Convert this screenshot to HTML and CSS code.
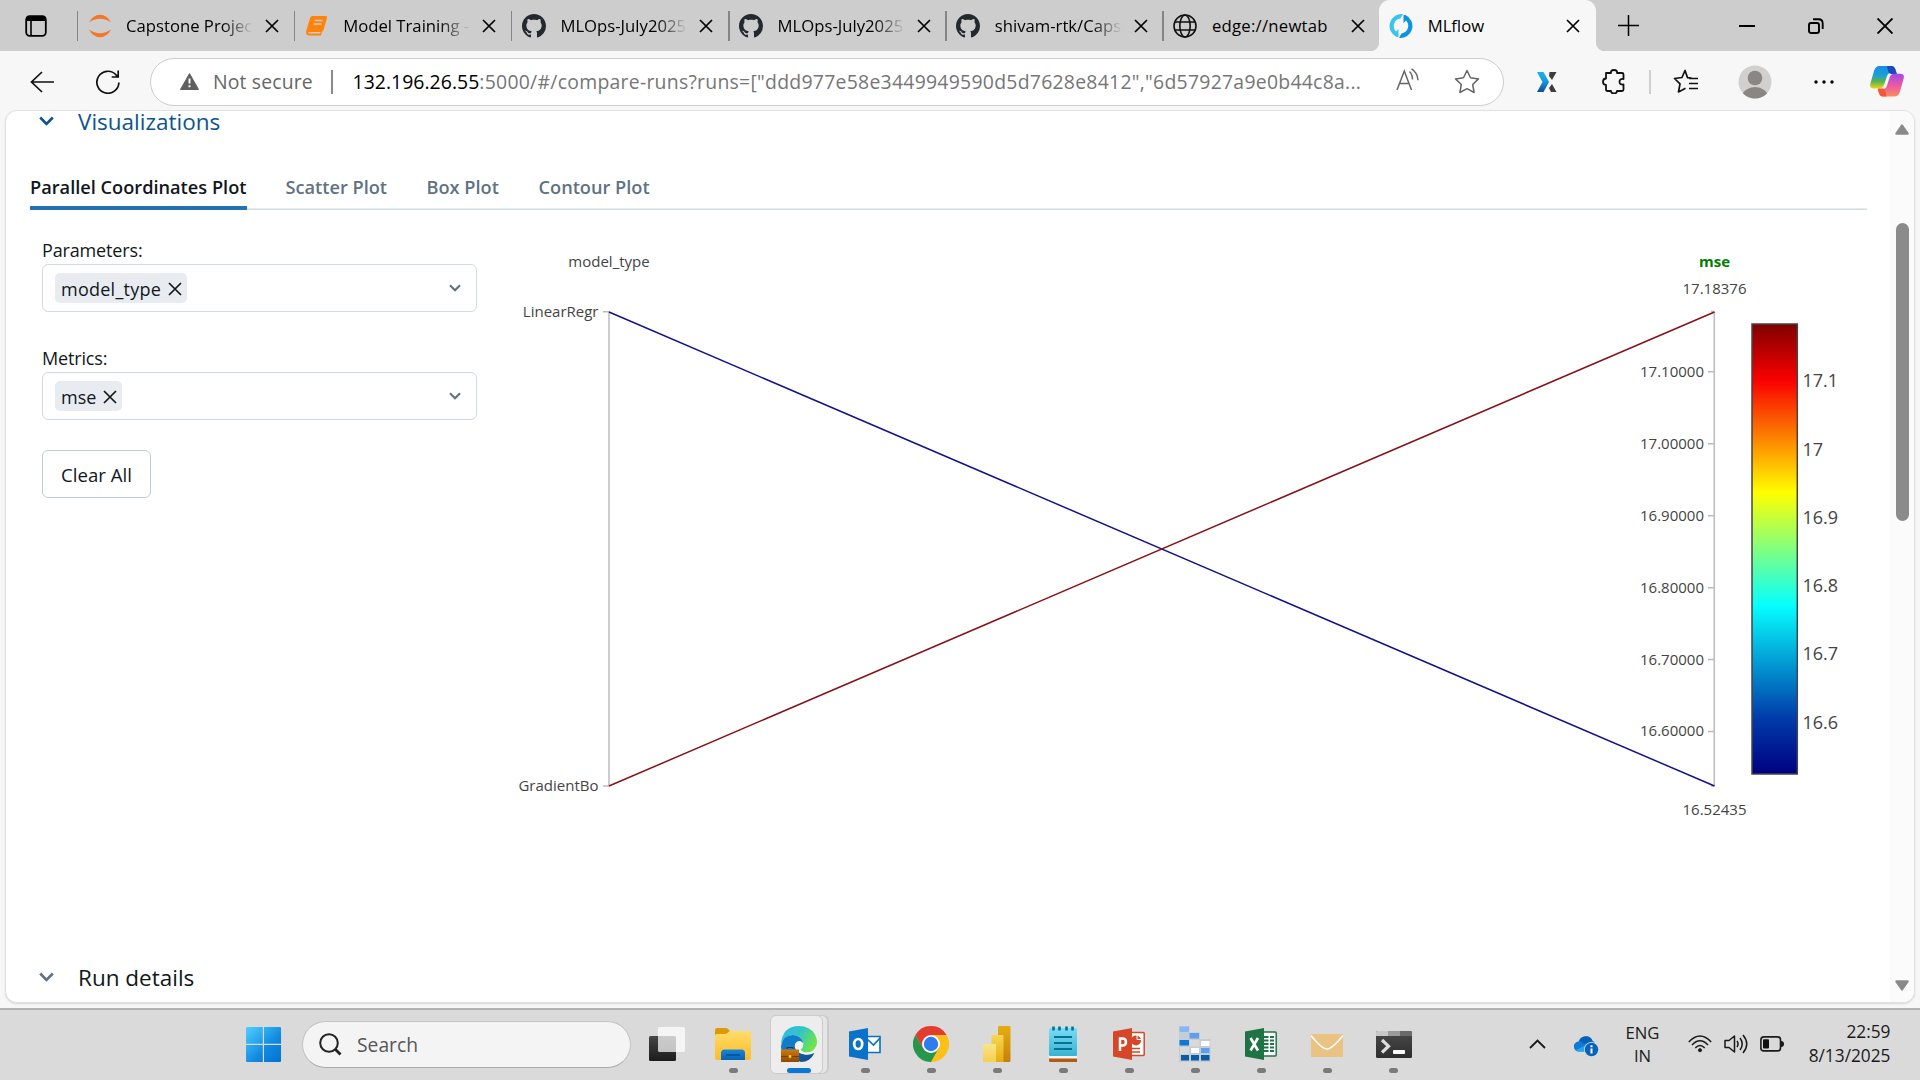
FILE: index.html
```html
<!DOCTYPE html>
<html lang="en">
<head>
<meta charset="utf-8">
<title>MLflow</title>
<link rel="stylesheet" href="styles.css">
</head>
<body>
<svg class="defs" width="0" height="0">
  <defs>
    <symbol id="x" viewBox="0 0 14 14"><path d="M1 1l12 12M13 1L1 13" fill="none" stroke="currentColor" stroke-width="1.7"/></symbol>
    <symbol id="chev" viewBox="0 0 15 10"><path d="M1.2 1.5l6.3 6.3 6.3-6.3" fill="none" stroke="currentColor" stroke-width="2.6"/></symbol>
    <symbol id="github" viewBox="0 0 16 16"><path fill="#24292f" d="M8 0C3.58 0 0 3.58 0 8c0 3.54 2.29 6.53 5.47 7.59.4.07.55-.17.55-.38 0-.19-.01-.82-.01-1.49-2.01.37-2.53-.49-2.69-.94-.09-.23-.48-.94-.82-1.13-.28-.15-.68-.52-.01-.53.63-.01 1.08.58 1.23.82.72 1.21 1.87.87 2.33.66.07-.52.28-.87.51-1.07-1.78-.2-3.64-.89-3.64-3.95 0-.87.31-1.59.82-2.15-.08-.2-.36-1.02.08-2.12 0 0 .67-.21 2.2.82.64-.18 1.32-.27 2-.27s1.36.09 2 .27c1.53-1.04 2.2-.82 2.2-.82.44 1.1.16 1.92.08 2.12.51.56.82 1.27.82 2.15 0 3.07-1.87 3.75-3.65 3.95.29.25.54.73.54 1.48 0 1.07-.01 1.93-.01 2.2 0 .21.15.46.55.38A8.01 8.01 0 0 0 16 8c0-4.42-3.58-8-8-8z"/></symbol>
    <linearGradient id="jet" x1="0" y1="1" x2="0" y2="0">
      <stop offset="0" stop-color="#000083"/><stop offset=".125" stop-color="#003caa"/><stop offset=".375" stop-color="#05ffff"/><stop offset=".625" stop-color="#ffff00"/><stop offset=".875" stop-color="#fa0000"/><stop offset="1" stop-color="#800000"/>
    </linearGradient>
    <linearGradient id="win" x1="0" y1="0" x2="1" y2="1"><stop offset="0" stop-color="#4fd0ff"/><stop offset=".6" stop-color="#1189e0"/><stop offset="1" stop-color="#0072d0"/></linearGradient>
    <linearGradient id="tvd" x1="0" y1="0" x2="0" y2="1"><stop offset="0" stop-color="#454545"/><stop offset="1" stop-color="#1c1c1c"/></linearGradient>
    <linearGradient id="fold" x1="0" y1="0" x2="0" y2="1"><stop offset="0" stop-color="#ffdc6b"/><stop offset="1" stop-color="#fcbc25"/></linearGradient>
    <linearGradient id="blu" x1="0" y1="0" x2="0" y2="1"><stop offset="0" stop-color="#1a86dc"/><stop offset="1" stop-color="#0462b4"/></linearGradient>
    <linearGradient id="edg" x1="0" y1="0" x2="1" y2=".5"><stop offset="0" stop-color="#35b6ec"/><stop offset=".5" stop-color="#2fc5c9"/><stop offset="1" stop-color="#6ee34c"/></linearGradient>
    <linearGradient id="edb" x1="0" y1="0" x2="1" y2="1"><stop offset="0" stop-color="#0f6fb8"/><stop offset="1" stop-color="#124a8c"/></linearGradient>
    <linearGradient id="case" x1="0" y1="0" x2="0" y2="1"><stop offset="0" stop-color="#cf7a10"/><stop offset="1" stop-color="#8f4a00"/></linearGradient>
    <linearGradient id="pb1" x1="0" y1="0" x2="0" y2="1"><stop offset="0" stop-color="#e6ad10"/><stop offset="1" stop-color="#c87e0e"/></linearGradient>
    <linearGradient id="pb2" x1="0" y1="0" x2="0" y2="1"><stop offset="0" stop-color="#f6d751"/><stop offset="1" stop-color="#e6ad10"/></linearGradient>
    <linearGradient id="pb3" x1="0" y1="0" x2="0" y2="1"><stop offset="0" stop-color="#f9e589"/><stop offset="1" stop-color="#f3d04c"/></linearGradient>
    <linearGradient id="note" x1="0" y1="0" x2="0" y2="1"><stop offset="0" stop-color="#7bdcf5"/><stop offset="1" stop-color="#35b3d3"/></linearGradient>
    <linearGradient id="term" x1="0" y1="0" x2="0" y2="1"><stop offset="0" stop-color="#4a4a4a"/><stop offset="1" stop-color="#2e2e2e"/></linearGradient>
    <linearGradient id="cp1" x1="0" y1="0" x2="0" y2="1"><stop offset="0" stop-color="#1c8be8"/><stop offset=".4" stop-color="#1a9fd8"/><stop offset=".7" stop-color="#5bb64a"/><stop offset="1" stop-color="#f4d21a"/></linearGradient>
    <linearGradient id="cp2" x1="0" y1="0" x2="0" y2="1"><stop offset="0" stop-color="#a04be8"/><stop offset=".5" stop-color="#e958a8"/><stop offset="1" stop-color="#ff8a5a"/></linearGradient>
    <linearGradient id="xb" x1="0" y1="0" x2="0" y2="1"><stop offset="0" stop-color="#17b4e8"/><stop offset=".5" stop-color="#1395dc"/><stop offset="1" stop-color="#114a92"/></linearGradient>
  </defs>
</svg>

<header class="tabstrip">
  <svg class="tabmenu" width="22" height="22" viewBox="0 0 22 22"><rect x="1.2" y="1.2" width="19.6" height="19.6" rx="3.5" fill="none" stroke="#000" stroke-width="1.8"/><path d="M1 6V4q0-3 3-3h14q3 0 3 3v2z"/><path d="M6 6v15" stroke="#000" stroke-width="1.6"/></svg>

  <div class="tab"><span class="fav"><svg width="22" height="24" viewBox="0 0 22 24"><path d="M0 8.5Q4 .8 11 .8T22 8.500Q17 4.800 11 4.800T0 8.500zM0 15.500Q5 19.200 11 19.200T22 15.500Q18 23.200 11 23.200T0 15.500z" fill="#f37726"/></svg></span><span class="title fade">Capstone Project</span><svg class="close"><use href="#x"/></svg></div>
  <div class="tab"><span class="fav"><svg width="22" height="20" viewBox="0 0 22 20"><path d="M6.500 0H20q1.500 0 1 1.800L17.500 14q-.4 1.200-1.500 1.500L15 19.500H3Q.5 19.500 0 17q0-1 .4-2.500L4 2.200Q4.800 0 6.500 0z" fill="#ff8309"/><path d="M8.500 4.500h8M7.500 8h8M2.500 16.800h12" stroke="#cdcdcd" stroke-width="1.400"/></svg></span><span class="title fade">Model Training -</span><svg class="close"><use href="#x"/></svg></div>
  <div class="tab"><span class="fav"><svg width="24" height="24"><use href="#github"/></svg></span><span class="title fade">MLOps-July2025</span><svg class="close"><use href="#x"/></svg></div>
  <div class="tab"><span class="fav"><svg width="24" height="24"><use href="#github"/></svg></span><span class="title fade">MLOps-July2025</span><svg class="close"><use href="#x"/></svg></div>
  <div class="tab"><span class="fav"><svg width="24" height="24"><use href="#github"/></svg></span><span class="title fade">shivam-rtk/Caps</span><svg class="close"><use href="#x"/></svg></div>
  <div class="tab"><span class="fav"><svg width="24" height="24" viewBox="0 0 24 24" fill="none" stroke="#111" stroke-width="1.600"><circle cx="12" cy="12" r="11"/><ellipse cx="12" cy="12" rx="5.200" ry="11"/><path d="M2 8h20M2 16h20"/></svg></span><span class="title wide">edge://newtab</span><svg class="close"><use href="#x"/></svg></div>
  <div class="tab active"><span class="fav"><svg width="24" height="24" viewBox="0 0 24 24"><path d="M7.500 23A12 12 0 0 1 14 .2l-2.600 4.400A7.600 7.600 0 0 0 7 17.500L9.500 15v8z" fill="#3ac4ee"/><path d="M16.500 1A12 12 0 0 1 10 23.800l2.600-4.400A7.600 7.600 0 0 0 17 6.500L14.500 9V1z" fill="#0a94e2"/></svg></span><span class="title">MLflow</span><svg class="close"><use href="#x"/></svg></div>

  <svg class="plus" width="21" height="21" viewBox="0 0 21 21"><path d="M10.500 0v21M0 10.500h21" stroke="#000" stroke-width="1.500"/></svg>
  <div class="winctl">
    <svg width="16" height="16" viewBox="0 0 16 16"><path d="M0 8h16" stroke="#000" stroke-width="2"/></svg>
    <svg width="16" height="16" viewBox="0 0 16 16" fill="none" stroke="#000" stroke-width="1.900"><rect x="1" y="5" width="10" height="10" rx="2"/><path d="M5 1.300h5.500q4.200 0 4.200 4.200v5.500"/></svg>
    <svg width="16" height="16" viewBox="0 0 16 16"><path d="M.5.5l15 15M15.500.5l-15 15" stroke="#000" stroke-width="1.900"/></svg>
  </div>
</header>

<nav class="toolbar">
  <svg class="back" width="24" height="22" viewBox="0 0 24 22" fill="none" stroke="#111" stroke-width="1.700"><path d="M24 11H1.500M12 1L1.500 11 12 21"/></svg>
  <svg class="reload" width="24" height="24" viewBox="0 0 24 24" fill="none" stroke="#111" stroke-width="1.700"><path d="M22.900 12.500A11 11 0 1 1 20 4.800l2 2M22.200.5v6.500h-6.500"/></svg>
  <div class="address">
    <svg class="warn" width="19" height="17" viewBox="0 0 19 17"><path d="M9.500.6L18.500 16.500H.5z" fill="#5f5f5f" stroke="#5f5f5f" stroke-linejoin="round"/><path d="M9.500 5.500v5M9.500 12.200v2" stroke="#fff" stroke-width="1.900"/></svg>
    <span class="notsec">Not secure</span><i class="bar"></i>
    <span class="url"><b>132.196.26.55</b>:5000/#/compare-runs?runs=["ddd977e58e3449949590d5d7628e8412","6d57927a9e0b44c8a...</span>
    <svg class="aloud" width="24" height="23" viewBox="0 0 24 23" fill="none" stroke="#666" stroke-width="1.500"><path d="M1 22L8.300 3 15.500 22M3.800 15.500h9M13.500 3.500q2.800 2.300 3 8M15.500.8q6 3.500 6.500 11.500"/></svg>
    <svg class="star" width="26" height="25" viewBox="0 0 26 25" fill="none" stroke="#666" stroke-width="1.500" stroke-linejoin="round"><path d="M13 1.500l3.500 7.300 8 1.100-5.800 5.600 1.400 8L13 19.700l-7.100 3.800 1.400-8L1.500 9.900l8-1.100z"/></svg>
  </div>
  <svg class="xext" width="20" height="20" viewBox="0 0 20 20"><path d="M0 0h6.500L12 10 6.500 20H0l5.500-10z" fill="url(#xb)"/><path d="M12.500 0H19.500l-4.500 8-3-4zM12 16l3-4 4.500 8h-5.500z" fill="#3d3d3d"/></svg>
  <svg class="puzzle" width="24" height="25" viewBox="0 0 24 25" fill="none" stroke="#111" stroke-width="1.800" stroke-linejoin="round"><path d="M4 4h5q-.5-3 3-3t3 3h5q1.500 0 1.500 1.500V10q-4-.5-4 2.700t4 2.800v5q0 1.500-1.500 1.500h-5q0 2.500-3 2.500T9 22H5.500Q4 22 4 20.500V16q-3 0-3-3.200T4 9.500z"/></svg>
  <i class="tbar"></i>
  <svg class="favs" width="26" height="25" viewBox="0 0 26 25" fill="none" stroke="#111" stroke-width="1.700" stroke-linejoin="round"><path d="M18.500 9l-4-.4L12 1.500 9 8.500l-7.500 1L7 14.800 5.500 23l7-3.800M16 9.500h9M16 14.500h9M16 19.500h9"/></svg>
  <svg class="avatar" width="34" height="34" viewBox="0 0 34 34"><clipPath id="av"><circle cx="17" cy="17" r="16.500"/></clipPath><g clip-path="url(#av)"><path d="M0 0h34v34H0z" fill="#d2d0ce"/><circle cx="17" cy="13" r="7.300" fill="#8a8683"/><ellipse cx="17" cy="32" rx="13" ry="10" fill="#8a8683"/></g></svg>
  <svg class="dots" width="20" height="4" viewBox="0 0 20 4"><circle cx="2" cy="2" r="1.700"/><circle cx="10" cy="2" r="1.700"/><circle cx="18" cy="2" r="1.700"/></svg>
  <svg class="copilot" width="34" height="31" viewBox="0 0 34 31"><path d="M9.500 0H21q3 0 4 3l1 4h-5q-3 0-4 3l-3 9q-1.200 3.500-5 3.500H4q-5 0-3.600-5L4 5q1.500-5 5.500-5z" fill="url(#cp1)"/><path d="M17 0h4.500q3 0 4 3.500l1.500 4.500h-6q-2 0-3-3z" fill="#1d49c0"/><path d="M24.500 30.500H13q-3 0-4-3l-1.200-4.500h5q3 0 4-3l3-9q1.200-3.200 5-3.200H30q5 0 3.600 5L30 25.500q-1.500 5-5.500 5z" fill="url(#cp2)"/><path d="M16.500 30.500H13q-3 0-4-3.500L8 22.500h5q1.800 0 2.500 3z" fill="#ef5a35"/></svg>
</nav>

<main class="viewport">
  <section class="page">
    <h2 class="section first"><svg width="15" height="10"><use href="#chev"/></svg>Visualizations</h2>
    <div class="plot-tabs"><span class="on">Parallel Coordinates Plot</span><span class="t2">Scatter Plot</span><span class="t3">Box Plot</span><span class="t4">Contour Plot</span></div>
    <div class="body">
      <form class="controls">
        <label>Parameters:</label>
        <div class="select"><span class="chip long">model_type<svg width="14" height="14"><use href="#x"/></svg></span><svg class="arrow" width="12" height="8"><use href="#chev"/></svg></div>
        <label class="second">Metrics:</label>
        <div class="select"><span class="chip">mse<svg width="14" height="14"><use href="#x"/></svg></span><svg class="arrow" width="12" height="8"><use href="#chev"/></svg></div>
        <button type="button" class="clear">Clear All</button>
      </form>
      <svg class="chart" width="1367" height="747" viewBox="500 210 1367 747">
        <g fill="none" stroke="#bcbcbc" stroke-width="1.500">
          <path d="M609 311.500V786M603 311.700h6M603 786h6"/>
          <path d="M1714.300 311.500V786M1711 311.500h3M1711 786h3M1708 371.800h6M1708 443.700h6M1708 515.700h6M1708 587.700h6M1708 659.500h6M1708 731.500h6"/>
        </g>
        <path d="M609 312L1714.500 786" stroke="#12128a" stroke-width="1.500"/>
        <path d="M609 786L1714.500 312" stroke="#861216" stroke-width="1.500"/>
        <g class="tick mid"><text x="609" y="267">model_type</text><text x="1714.500" y="294">17.18376</text><text x="1714.500" y="814.500">16.52435</text><text class="mse" x="1714.500" y="267">mse</text></g>
        <g class="tick end"><text x="598.500" y="316.800">LinearRegr</text><text x="598.500" y="791">GradientBo</text>
          <text x="1704" y="377">17.10000</text><text x="1704" y="449">17.00000</text><text x="1704" y="521">16.90000</text><text x="1704" y="593">16.80000</text><text x="1704" y="665">16.70000</text><text x="1704" y="736">16.60000</text></g>
        <rect x="1752" y="324" width="45.300" height="450" fill="url(#jet)" stroke="#444" stroke-width="1.500"/>
        <g class="scale"><text x="1802.500" y="387">17.1</text><text x="1802.500" y="456">17</text><text x="1802.500" y="524">16.9</text><text x="1802.500" y="592">16.8</text><text x="1802.500" y="660">16.7</text><text x="1802.500" y="729">16.6</text></g>
      </svg>
    </div>
    <h2 class="section last"><svg width="15" height="10"><use href="#chev"/></svg>Run details</h2>
  </section>
  <aside class="scroll">
    <svg width="14" height="11" viewBox="0 0 14 11"><path d="M7 1l6 8.500q0 .5-.5.500h-11q-.5 0-.5-.5z" fill="#8a8a8a" stroke="#8a8a8a" stroke-width="1.500" stroke-linejoin="round"/></svg>
    <i class="thumb"></i>
    <svg class="down" width="14" height="11" viewBox="0 0 14 11"><path d="M7 10l6-8.500q0-.5-.5-.5h-11q-.5 0-.5.5z" fill="#8a8a8a" stroke="#8a8a8a" stroke-width="1.500" stroke-linejoin="round"/></svg>
  </aside>
</main>

<footer class="taskbar">
  <svg class="start" width="35" height="35" viewBox="0 0 35 35"><path d="M1 0h15.800v16.800H0V1q0-1 1-1zM18 0h16q1 0 1 1v15.800H18zM0 18h16.800v17H1q-1 0-1-1zM18 18h17v16q0 1-1 1H18z" fill="url(#win)"/></svg>
  <div class="search"><svg width="23" height="23" viewBox="0 0 23 23" fill="none" stroke="#222"><circle cx="10" cy="10" r="8.800" stroke-width="2"/><path d="M16 16l5.500 5.500" stroke-width="2.800"/></svg>Search</div>
  <div class="apps">
    <div class="app plain"><svg width="36" height="34" viewBox="0 0 36 34"><rect y="9" width="27" height="25" rx="1.500" fill="url(#tvd)"/><rect x="9" width="27" height="25" rx="1.500" fill="#fff" fill-opacity=".72"/></svg></div>
    <div class="app"><svg width="36" height="36" viewBox="0 0 36 36"><path d="M0 4q0-2 2-2h9q1 0 2 1l2 2v6H0z" fill="#dd9a06"/><path d="M0 9.500Q0 8 1.500 8H10q1.500 0 2.500-1l1-1q1-1 2.200-1H34.500Q36 5 36 6.500V32q0 2-2 2H2q-2 0-2-2z" fill="url(#fold)"/><path d="M6 34v-7q0-3.500 3.500-3.500h17q3.500 0 3.500 3.500v7z" fill="url(#blu)"/><path d="M11 29h14" stroke="#0a4f90" stroke-width="1.500"/></svg></div>
    <div class="app current"><svg width="36" height="36" viewBox="0 0 36 36"><path d="M9 20q0 13 11 16 9 0 13.500-9-5 2.500-10 1.500-6-1.500-8-8z" fill="url(#edb)"/><path d="M0 19Q1 0 18 0q11 0 16 8.500Q38 17 34 22q-3 4.500-9 4.500-5 0-5.500-3 3-2.200 2.800-5.500Q22 10 12.500 9 3 9 0 19z" fill="url(#edg)"/><path d="M0 20Q2 9 12 9q9 .8 10.200 8-4.200-4-7.700 1-2.500 4 0 9L12 34Q0 31 0 20z" fill="#117cc9"/><path d="M14 18q3.500-5.500 8.200-.5 0 4.500-2.800 6 3 4 9.600 2.800 3-.8 5-2.300-2 4-7 4.200-10 1-13-6.200z" fill="#f2f2f2"/><rect y="23.500" width="18" height="12.500" fill="url(#case)"/><path d="M0 30.500h18" stroke="#754000"/><path d="M6 23v-1.500h6V23" fill="none" stroke="#333"/><circle cx="9" cy="30.500" r="1.400" fill="#ffd83a"/></svg></div>
    <div class="app"><svg width="32" height="32" viewBox="0 0 32 32"><path d="M17 8.500h14v16H17" fill="#fff" stroke="#0a6fc0" stroke-width="1.600"/><path d="M18 11l6.500 6L31 10" fill="none" stroke="#0a6fc0" stroke-width="1.600"/><path d="M0 3.500L19 0v32L0 28.500z" fill="#0a72c8"/><ellipse cx="9.200" cy="16" rx="4" ry="5" fill="none" stroke="#fff" stroke-width="2.700"/></svg></div>
    <div class="app"><svg width="36" height="36" viewBox="0 0 36 36"><path d="M18 18L2.410 9A18 18 0 0 1 33.590 9z" fill="#e33b2e"/><path d="M18 18L33.590 9A18 18 0 0 1 18 36z" fill="#fcc019"/><path d="M18 9h15.590q-2 3-8 4.500z" fill="#fcc019"/><path d="M18 18v18A18 18 0 0 1 2.410 9l8 13.500z" fill="#25964a"/><path d="M18 36l7.800-13.500-5-2-9 2.500q3 4 6.200 4z" fill="#25964a"/><path d="M18 36l7.800-13.500L30 20l2 9z" fill="#fcc019"/><path d="M2.410 9L10.300 22.700 13 13l5-4z" fill="#e33b2e"/><circle cx="18" cy="18" r="9" fill="#fff"/><circle cx="18" cy="18" r="7.200" fill="#2f7cee"/></svg></div>
    <div class="app"><svg width="28" height="36" viewBox="0 0 28 36"><rect x="15" width="12.500" height="36" rx="1" fill="url(#pb1)"/><path d="M8.500 9h11q1 0 1 1v26h-12z" fill="url(#pb2)"/><path d="M1 18h11q1 0 1 1v17H0V19q0-1 1-1z" fill="url(#pb3)"/></svg></div>
    <div class="app"><svg width="28" height="36" viewBox="0 0 28 36"><path d="M0 30h28v3H0z" fill="#f4f4f4"/><path d="M0 32.500h28V36H1q-1 0-1-1z" fill="#b25a13"/><rect y="2" width="28" height="28" rx="1.500" fill="url(#note)"/><path d="M5 11h18M5 17h18M5 23h18" stroke="#067091" stroke-width="1.800"/><path d="M4.500.5v4M10.500.5v4M17.500.5v4M23.500.5v4" stroke="#067091" stroke-width="2.600"/></svg></div>
    <div class="app"><svg width="32" height="32" viewBox="0 0 32 32"><rect x="15" y="4.500" width="16.200" height="23" rx="1" fill="#fff" stroke="#d6472a" stroke-width="1.500"/><circle cx="23" cy="12.500" r="5" fill="#d6472a"/><path d="M24 6v5.500h5.500" stroke="#fff" fill="none"/><path d="M18 20.500h9M18 24h9" stroke="#d6472a" stroke-width="1.500"/><path d="M0 3.500L19 0v32L0 28.500z" fill="#d6472a"/><path d="M7 23V10.500h2.500q3.500 0 3.500 3.500t-3.500 3.500H7" fill="none" stroke="#fff" stroke-width="2.500"/></svg></div>
    <div class="app"><svg width="32" height="36" viewBox="0 0 32 36"><path d="M0 0h10.500v6.500H21V13h10.500v23H0z" fill="#c4ccd4"/><path d="M10.500 14h10v6.500h-10zM1 21h9v7H1z" fill="#d9d9d9"/><path d="M.5.500h9.500v5.500H.5z" fill="#86b8f7"/><path d="M10.500 7h9.500v5.500h-9.500zM22 22h8.500v5H22z" fill="#5f9ff0"/><path d="M.5 14h9.500v5.500H.5z" fill="#0f78d4"/><path d="M22 15h8.500v5H22zM12 22h8v5h-8z" fill="#fff"/><path d="M2 29h8v5.500H2zM12 29h8v5.500h-8zM22 29h8.500v5.500H22z" fill="#0a5ca6"/></svg></div>
    <div class="app"><svg width="32" height="32" viewBox="0 0 32 32"><rect x="15" y="4" width="16.200" height="24" rx="1" fill="#fff" stroke="#1f7446" stroke-width="1.500"/><path d="M19 9h4.500M25 9h4M19 12.500h4.500M25 12.500h4M19 16h4.500M25 16h4M19 19.500h4.500M25 19.500h4M19 23h4.500M25 23h4" stroke="#1f7446" stroke-width="2"/><path d="M0 3.500L19 0v32L0 28.500z" fill="#1f7446"/><path d="M5.500 10l7.500 12.500M13 10L5.500 22.500" stroke="#fff" stroke-width="2.600"/></svg></div>
    <div class="app"><svg class="mail" width="32" height="23" viewBox="0 0 32 23"><path d="M0 0h32v23H0z" fill="#eac282"/><path d="M0 1.500Q11 15 16 15T32 1.500" fill="none" stroke="#fff" stroke-width="1.500"/></svg></div>
    <div class="app"><svg width="36" height="27" viewBox="0 0 36 27"><rect width="36" height="27" rx="1.500" fill="url(#term)"/><path d="M1.500 0H12v5H0V1.500Q0 0 1.500 0z" fill="#c8c8c8"/><path d="M12 0h12v5H12z" fill="#9b9b9b"/><path d="M24 0h10.500Q36 0 36 1.500V5H24z" fill="#6b6b6b"/><path d="M6 9l6.500 6.200L6 21.500" fill="none" stroke="#dcdcdc" stroke-width="3.200"/><rect x="17" y="19" width="12" height="4" rx=".8" fill="#fafafa"/></svg></div>
  </div>
  <div class="tray">
    <svg class="up" width="17" height="10" viewBox="0 0 17 10"><path d="M1 9l7.500-7.500L16 9" fill="none" stroke="#1a1a1a" stroke-width="1.900"/></svg>
    <svg class="cloud" width="25" height="21" viewBox="0 0 25 21"><path d="M5 15.500A5 5 0 0 1 4.500 5.500 7.500 7.500 0 0 1 18.500 5q3 .8 3 5v5.500z" fill="#0f7bd8"/><path d="M5.500 4.500Q8-.2 13 .3q4 .5 5.700 4.700L10 8z" fill="#0a5fb8"/><path d="M2 14l9-4.500v6H5q-2 0-3-1.500z" fill="#2aa3ee"/><circle cx="17.500" cy="13.500" r="7.500" fill="#d9d9d9"/><circle cx="17.500" cy="13.500" r="6.700" fill="#0862ba"/><path d="M17.500 9.300v2M17.500 12.500v5" stroke="#fff" stroke-width="2"/></svg>
    <div class="lang">ENG<br>IN</div>
    <svg class="wifi" width="24" height="18" viewBox="0 0 24 18" fill="none" stroke="#1a1a1a" stroke-width="1.500"><path d="M.8 7Q12-4.800 23.200 7M4 10Q12 1.500 20 10M7.300 13Q12 8 16.700 13"/><circle cx="12" cy="15.200" r="1.600" fill="#1a1a1a" stroke-width=".8"/></svg>
    <svg class="vol" width="25" height="20" viewBox="0 0 25 20" fill="none" stroke="#1a1a1a" stroke-width="1.500" stroke-linejoin="round"><path d="M1 6.500h4L10.500 2v16L5 13.500H1zM13 7q2 3 0 6M16 4q4.500 6 0 12M19 1q7.500 9 0 18"/></svg>
    <svg class="bat" width="24" height="16" viewBox="0 0 24 16"><rect x=".9" y=".9" width="19.600" height="14" rx="3" fill="none" stroke="#1a1a1a" stroke-width="1.600"/><rect x="3" y="3.300" width="6" height="9.300" rx="1" fill="#111"/><path d="M21 5q3 0 3 3t-3 3z" fill="#1a1a1a"/></svg>
    <div class="clock">22:59<br>8/13/2025</div>
  </div>
</footer>
</body>
</html>
```
FILE: styles.css
```css
* { box-sizing: border-box; }
body { margin: 0; width: 1920px; height: 1080px; overflow: hidden; display: flex; flex-direction: column; background: #f7f7f7; font-family: "Open Sans", "Noto Sans", sans-serif; color: #11171c; }
svg { display: block; flex: none; }
.defs { position: absolute; }

/* Tab strip */
.tabstrip { height: 51px; flex: none; display: flex; align-items: center; background: #cdcdcd; color: #000; padding-left: 25px; }
.tabmenu { margin-right: 29px; }
.tab { position: relative; width: 217.200px; height: 51px; display: flex; align-items: center; flex: none; font-size: 16.700px; }
.tab::before { content: ""; width: 1.500px; height: 30px; margin-left: .5px; background: #858585; }
.fav { width: 24px; margin-left: 9.500px; display: flex; justify-content: center; }
.title { width: 127px; margin-left: 14.500px; white-space: nowrap; overflow: hidden; line-height: 30px; }
.wide { letter-spacing: .25px; }
.fade { -webkit-mask-image: linear-gradient(90deg, #000 76%, transparent 100%); mask-image: linear-gradient(90deg, #000 76%, transparent 100%); }
.close { width: 14px; height: 14px; margin-left: 12px; }
.active { background: #f7f7f7; border-radius: 11px 11px 0 0; }
.active::before { background: none; margin-left: 0; }
.active .fav { margin-left: 8.500px; }
.active .close { margin-left: 11px; }
.active::after { content: ""; position: absolute; left: -9px; right: -9px; bottom: 0; height: 9px; background: radial-gradient(circle at 0 0, transparent 9px, #f7f7f7 9.500px) left / 9px 9px no-repeat, radial-gradient(circle at 100% 0, transparent 9px, #f7f7f7 9.500px) right / 9px 9px no-repeat; }
.plus { margin-left: 21.500px; }
.winctl { display: flex; gap: 53px; margin-left: auto; padding-right: 27px; }

/* Toolbar */
.toolbar { height: 59px; flex: none; display: flex; align-items: center; padding: 2px 0 0 30px; }
.reload { margin-left: 42px; }
.address { width: 1354px; height: 48px; margin-left: 30px; border: 1.500px solid #cdcdcd; border-radius: 24px; background: #fff; display: flex; align-items: center; padding-left: 29px; font-size: 19.400px; color: #666; white-space: nowrap; }
.notsec { width: 101px; margin-left: 14px; letter-spacing: .15px; }
.bar { width: 1.500px; height: 24px; background: #8a8a8a; margin-left: 17px; }
.url { width: 1009px; margin-left: 20px; color: #767676; letter-spacing: .27px; }
.url b { font-weight: 400; color: #000; letter-spacing: .05px; }
.aloud { margin-left: 34px; margin-bottom: 4px; }
.star { margin-left: 34px; }
.xext { margin-left: 33px; }
.puzzle { margin-left: 45px; }
.tbar { width: 1.500px; height: 24px; background: #cfcfcf; margin-left: 23px; }
.favs { margin-left: 22px; }
.avatar { margin-left: 39px; }
.dots { margin-left: 42px; }
.copilot { margin-left: 36px; }

/* Page viewport */
.viewport { width: 1910px; height: 893px; flex: none; margin-left: 5px; display: flex; background: #fff; border: 1px solid #e2e2e2; border-radius: 12px; overflow: hidden; box-shadow: 0 1px 2px #0002; }
.page { width: 1884px; padding-left: 24px; }
.section { height: 40px; margin: 0; padding-left: 9px; display: flex; align-items: center; gap: 24px; font-weight: 400; font-size: 22.500px; }
.section svg { color: #5f7281; }
.first { margin-top: -10px; color: #0e538b; }
.first svg { color: #0e538b; }
.plot-tabs { width: 1837px; height: 42px; margin-top: 27px; display: flex; box-shadow: inset 0 -1.500px #d1d9e1; font-size: 18.200px; font-weight: 600; line-height: 38px; color: #5f7281; white-space: nowrap; }
.plot-tabs .on { width: 217px; color: #11171c; border-bottom: 4px solid #2272b4; }
.t2 { width: 102px; margin-left: 38.500px; }
.t3 { width: 74px; margin-left: 39px; }
.t4 { margin-left: 38px; }
.body { display: flex; height: 747px; }
.controls { width: 435px; margin: 26px 23px 0 12px; font-size: 18px; }
label { display: block; height: 28px; line-height: 28px; letter-spacing: -.15px; }
.second { margin-top: 32px; }
.select { height: 48px; display: flex; align-items: center; padding: 0 15px 0 12px; border: 1.500px solid #d1d9e1; border-radius: 6px; }
.chip { height: 30px; display: flex; align-items: center; gap: 7px; padding: 1px 5px 0 6px; background: #e8ecf0; border-radius: 5px; }
.long { letter-spacing: .25px; }
.arrow { margin-left: auto; color: #5f7281; }
.clear { display: block; width: 109px; height: 48px; margin-top: 30px; padding: 0; border: 1.500px solid #c0cdd8; border-radius: 6px; background: #fff; font: inherit; font-size: 18.600px; color: #11171c; }
.chart { margin: 0; }
.tick { font-size: 15px; fill: #444; }
.mid { text-anchor: middle; }
.end { text-anchor: end; }
.mse { fill: green; font-weight: 700; }
.scale { font-size: 18px; fill: #444; }
.scroll { width: 24px; background: #fbfbfb; display: flex; flex-direction: column; align-items: center; padding: 12.500px 0 11px; }
.thumb { width: 13px; height: 298px; margin-top: 88px; border-radius: 7px; background: #8b8b8b; }
.down { margin-top: auto; }

/* Taskbar */
.taskbar { height: 72px; flex: none; margin-top: 5px; border-top: 2px solid #b1b1b1; background: #dadada; display: flex; align-items: center; padding: 0 0 2px 246px; }
.search { width: 329px; height: 47px; margin-left: 21px; border: 1.500px solid #c3c3c3; border-bottom-color: #aaa; border-radius: 24px; background: #f4f4f4; display: flex; align-items: center; gap: 15px; padding-left: 16px; font-size: 19.300px; color: #575757; }
.apps { display: flex; margin-left: 3px; height: 100%; }
.app { position: relative; width: 66.050px; height: 68px; display: flex; justify-content: center; align-items: center; }
.app svg { position: relative; z-index: 1; }
.app::after { content: ""; position: absolute; bottom: 5px; width: 9px; height: 5px; border-radius: 3px; background: #7a7a7a; }
.plain::after { display: none; }
.current::before { content: ""; position: absolute; left: 3.500px; top: 5px; width: 51px; height: 57px; border: 1px solid #cbcbcb; border-radius: 6px; background: #ededed; box-shadow: 5px 0 0 -1px #e6e6e6, 6px 0 0 0 #cbcbcb; }
.current::after { width: 24px; background: #0a78d4; z-index: 1; }
.mail { margin-top: 3px; }
.tray { display: flex; align-items: center; margin-left: auto; padding-right: 29.500px; color: #1a1a1a; }
.cloud { margin-left: 28px; margin-top: 4px; }
.lang { width: 46px; margin-left: 21px; text-align: center; font-size: 16.700px; line-height: 23px; }
.wifi { margin-left: 22px; }
.vol { margin-left: 12px; }
.bat { margin-left: 11px; }
.clock { width: 90px; margin-left: 17px; text-align: right; font-size: 17.300px; line-height: 24px; }
```
